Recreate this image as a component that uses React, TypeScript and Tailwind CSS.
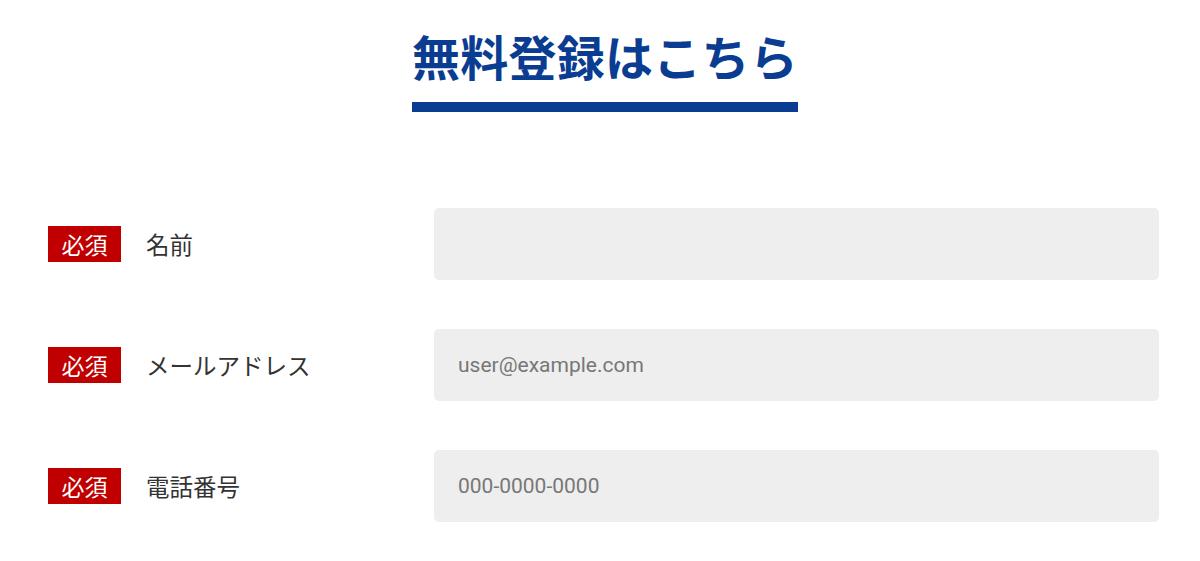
const fields = [
  { label: '名前', placeholder: '', type: 'text' },
  { label: 'メールアドレス', placeholder: 'user@example.com', type: 'email' },
  { label: '電話番号', placeholder: '000-0000-0000', type: 'tel' },
];

const jp = "font-['Noto_Sans_CJK_JP','Noto_Sans',sans-serif]";

export default function App() {
  return (
    <div className={`min-h-screen bg-white ${jp}`}>
      <div className="flex justify-center pt-[22px]">
        <h2 className="ml-[10px] border-b-[10px] border-[#0a3d91] pb-[13px] text-[48px] font-bold leading-[1.4] tracking-[0.25px] text-[#0a3d91]">
          無料登録はこちら
        </h2>
      </div>

      <form className="mt-[96px] flex flex-col gap-[49px] pl-[48px] pr-[41px]">
        {fields.map((f) => (
          <div key={f.label} className="flex items-center">
            <div className="flex w-[386px] shrink-0 items-center">
              <span className="flex h-[36px] w-[73px] items-center justify-center bg-[#c00000] text-[23px] leading-none text-white">
                必須
              </span>
              <span className="ml-[25px] text-[23.5px] text-[#333333]">{f.label}</span>
            </div>
            <input
              type={f.type}
              placeholder={f.placeholder}
              className="h-[72px] flex-1 rounded-[5px] bg-[#eeeeee] px-[24px] font-['Roboto',sans-serif] text-[21px] text-[#333] outline-none placeholder:text-[#777777]"
            />
          </div>
        ))}
      </form>
    </div>
  );
}
